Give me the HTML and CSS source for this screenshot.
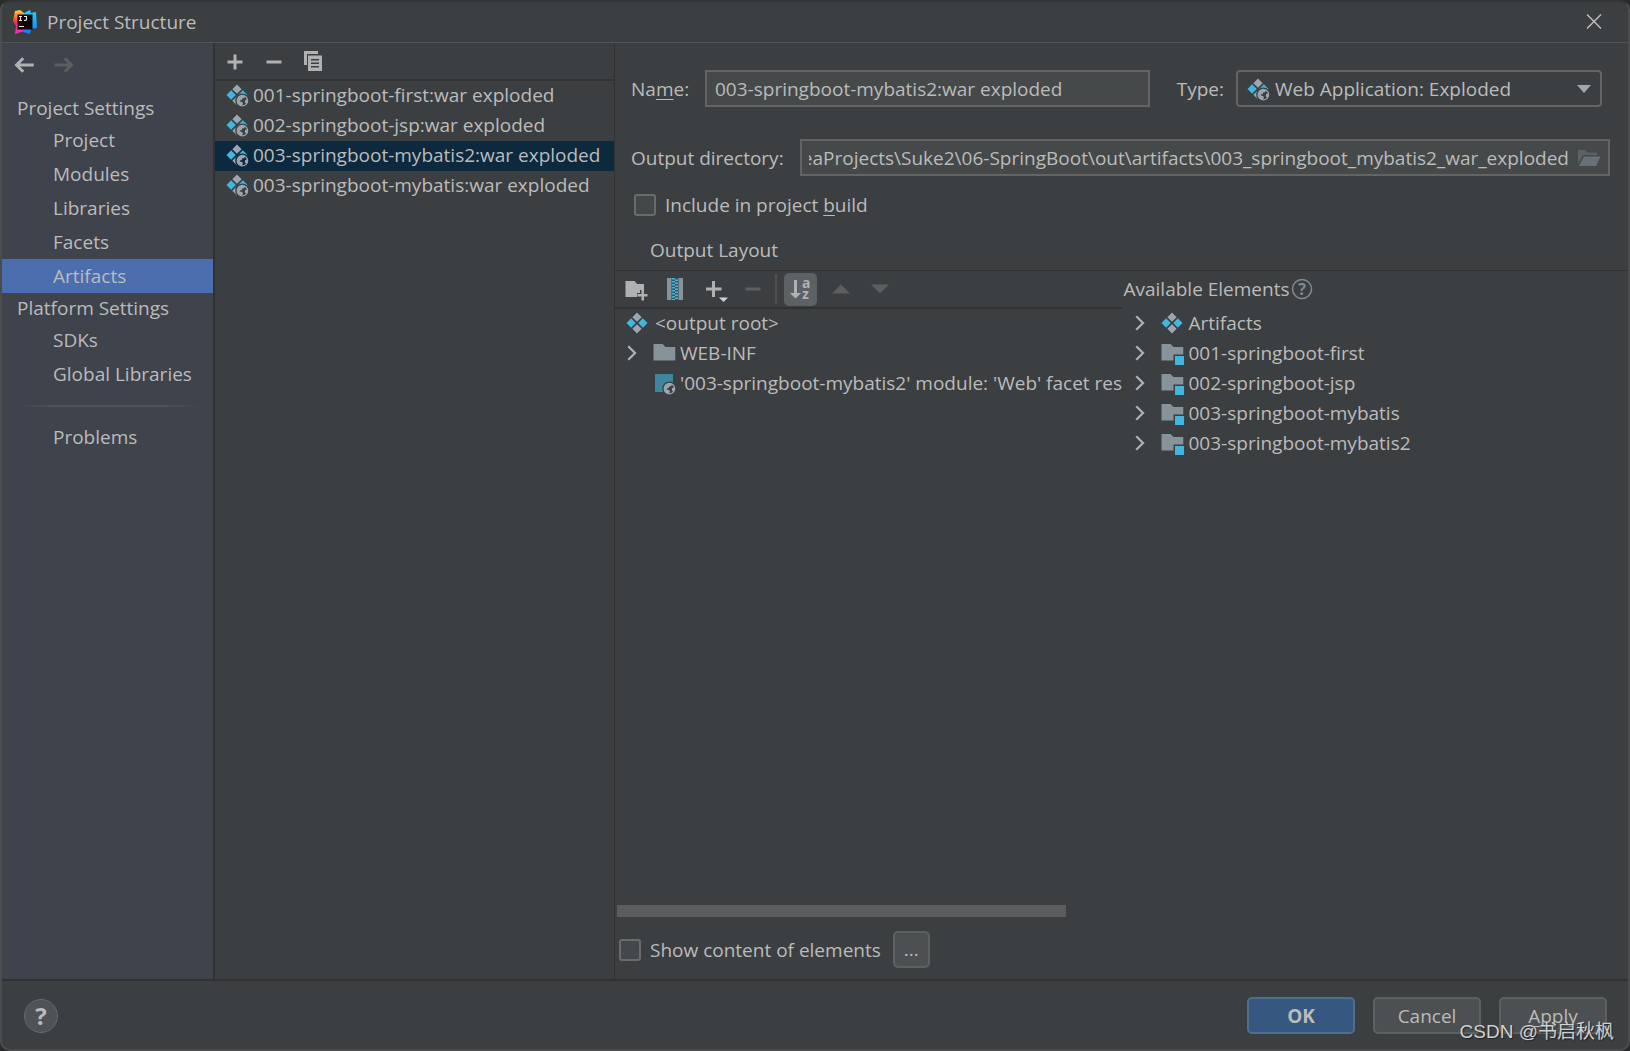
FILE: index.html
```html
<!DOCTYPE html>
<html lang="en">
<head>
<meta charset="utf-8">
<title>Project Structure</title>
<link rel="stylesheet" href="styles.css">
</head>
<body>
<svg class="defs" aria-hidden="true">
  <defs>
    <mask id="globe-cut"><rect width="16" height="16" fill="#fff"/><circle cx="11.6" cy="11.8" r="4.8" fill="#000"/></mask>
    <linearGradient id="lg-blue" x1="0" y1="0" x2="0" y2="1"><stop offset="0" stop-color="#21d7fd"/><stop offset="1" stop-color="#087cfa"/></linearGradient>
    <linearGradient id="lg-warm" x1="0" y1="0" x2="0" y2="1"><stop offset="0" stop-color="#fcd84a"/><stop offset=".3" stop-color="#f97a12"/><stop offset=".5" stop-color="#fe2857"/><stop offset="1" stop-color="#e835c4"/></linearGradient>
    <symbol id="globe" viewBox="0 0 16 16">
      <circle cx="11.6" cy="11.8" r="3.500" fill="none" stroke="#9aa7b0" stroke-width="0.8"/>
      <path d="M8.200 11.500 9.200 9.200 11.500 8.300 13.600 8.800 12.600 10.200 11.400 10.400 11.200 11.400 10 11.600 9.800 12.400 11.400 12.700 12 13.600 11.200 15.200 9.400 14.600 8.300 13z M13.400 11.300 15.200 10.800 15.200 12.600 14 13.800 13.200 12.800z" fill="#9aa7b0"/>
    </symbol>
    <symbol id="diamonds" viewBox="0 0 16 16">
      <path d="M8 1l3.100 3.100L8 7.200 4.900 4.100z M8 8.800l3.100 3.100L8 15l-3.100-3.100z" fill="#9aa7b0"/>
      <path d="M4.100 4.900 7.200 8l-3.100 3.100L1 8z M11.900 4.900 15 8l-3.100 3.100L8.800 8z" fill="#40b6e0"/>
    </symbol>
    <symbol id="web-artifact" viewBox="0 0 16 16">
      <g mask="url(#globe-cut)"><use href="#diamonds" width="16" height="16"/></g>
      <use href="#globe" width="16" height="16"/>
    </symbol>
    <symbol id="web-facet" viewBox="0 0 16 16">
      <path d="M2 2h12v12H2z" fill="#3e86a0" mask="url(#globe-cut)"/>
      <use href="#globe" width="16" height="16"/>
    </symbol>
    <symbol id="folder" viewBox="0 0 16 16"><path d="M1 2h6l2 2h6.500v9H1z" fill="#87939a"/></symbol>
    <symbol id="module" viewBox="0 0 16 16">
      <path d="M1 2h6l2 2h6.500v5H9v4H1z" fill="#87939a"/><path d="M10 10h6v6h-6z" fill="#40b6e0"/>
    </symbol>
    <symbol id="chevron" viewBox="0 0 16 16"><path d="M5.500 3.500 10 8l-4.500 4.500" fill="none" stroke="#afb1b3" stroke-width="1.500"/></symbol>
    <symbol id="plus" viewBox="0 0 16 16"><path d="M7 3h2v4h4v2H9v4H7V9H3V7h4z" fill="currentColor"/></symbol>
    <symbol id="minus" viewBox="0 0 16 16"><path d="M3 7h10v2H3z" fill="currentColor"/></symbol>
    <symbol id="arrow-left" viewBox="0 0 16 16"><path d="M14.500 8H3M7.500 3.500 3 8l4.500 4.500" fill="none" stroke="currentColor" stroke-width="2"/></symbol>
    <symbol id="arrow-right" viewBox="0 0 16 16"><path d="M1.500 8H13M8.500 3.500 13 8l-4.500 4.500" fill="none" stroke="currentColor" stroke-width="2"/></symbol>
  </defs>
</svg>

<div class="window">
  <header class="titlebar">
    <svg class="icon" viewBox="0 0 24 24" aria-hidden="true">
      <path d="M2 1l5-1 4 3v18l-9 3 1-8L0 11z" fill="url(#lg-warm)"/>
      <path d="M11 3l6-3 1 3 5-1 1 16-6 1-1 5-7-2z" fill="url(#lg-blue)"/>
      <path d="M4.500 4.500h15v15h-15z" fill="#120408"/>
      <path d="M6 6.500h3M6 10.500h3M7.500 6v5M11 6.500h2.500v3q0 1-2.500 1M6 16.500h5" fill="none" stroke="#e8e8e8" stroke-width="1.100"/>
    </svg>
    <h1 class="title">Project Structure</h1>
    <button class="icon-button" aria-label="Close">
      <svg class="icon" viewBox="0 0 24 24"><path d="M5 4.500l14 14M19 4.500 5 18.500" fill="none" stroke="#c0c1c1" stroke-width="1.400"/></svg>
    </button>
  </header>

  <div class="content">
    <nav class="sidebar" aria-label="Settings">
      <div class="history">
        <button class="icon-button" aria-label="Back"><svg class="icon"><use href="#arrow-left"/></svg></button>
        <button class="icon-button dim" aria-label="Forward" disabled><svg class="icon"><use href="#arrow-right"/></svg></button>
      </div>
      <h2 class="group">Project Settings</h2>
      <a class="nav-item" href="#project">Project</a>
      <a class="nav-item" href="#modules">Modules</a>
      <a class="nav-item" href="#libraries">Libraries</a>
      <a class="nav-item" href="#facets">Facets</a>
      <a class="nav-item selected" href="#artifacts" aria-current="page">Artifacts</a>
      <h2 class="group">Platform Settings</h2>
      <a class="nav-item" href="#sdks">SDKs</a>
      <a class="nav-item" href="#global-libraries">Global Libraries</a>
      <hr class="nav-rule">
      <a class="nav-item" href="#problems">Problems</a>
    </nav>

    <section class="artifacts" aria-label="Artifacts">
      <div class="list-toolbar">
        <button class="icon-button" aria-label="Add"><svg class="icon"><use href="#plus"/></svg></button>
        <button class="icon-button" aria-label="Remove"><svg class="icon"><use href="#minus"/></svg></button>
        <button class="icon-button" aria-label="Copy">
          <svg class="icon" viewBox="0 0 24 24"><path d="M3 1h14v3H6v11H3z" fill="#afb1b3"/><path d="M7 5.500h14V21H7zM10 9v1.500h8V9zm0 3.500V14h8v-1.500zM10 16v1.500h8V16z" fill="#afb1b3" fill-rule="evenodd"/></svg>
        </button>
      </div>
      <ul class="rows">
        <li class="row"><svg class="icon"><use href="#web-artifact"/></svg>001-springboot-first:war exploded</li>
        <li class="row"><svg class="icon"><use href="#web-artifact"/></svg>002-springboot-jsp:war exploded</li>
        <li class="row selected"><svg class="icon"><use href="#web-artifact"/></svg>003-springboot-mybatis2:war exploded</li>
        <li class="row"><svg class="icon"><use href="#web-artifact"/></svg>003-springboot-mybatis:war exploded</li>
      </ul>
    </section>

    <main class="editor">
      <div class="form">
        <div class="field-row name-row">
          <label class="name-label" for="name">Na<u>m</u>e:</label>
          <input class="field name-field" id="name" type="text" value="003-springboot-mybatis2:war exploded">
          <label for="type">Type:</label>
          <div class="combo">
            <svg class="icon"><use href="#web-artifact"/></svg>
            <select id="type"><option>Web Application: Exploded</option></select>
            <svg class="combo-arrow" viewBox="0 0 14 8" aria-hidden="true"><path d="M0 0h14L7 8z" fill="#a4a6a8"/></svg>
          </div>
        </div>
        <div class="field-row">
          <label class="output-label" for="output">Output directory:</label>
          <div class="field path">
            <input id="output" type="text" dir="rtl" value="D:\java\IdeaProjects\Suke2\06-SpringBoot\out\artifacts\003_springboot_mybatis2_war_exploded">
            <button class="icon-button" aria-label="Browse"><svg class="icon" viewBox="0 0 24 24"><path d="M1 18V4h7l2.500 2.500H20V9H6z" fill="#5b6164"/><path d="M7 10.500h16.500L19 20H2z" fill="#67717a"/></svg></button>
          </div>
        </div>
        <label class="check include"><input type="checkbox"><span>Include in project <u>b</u>uild</span></label>
        <h2 class="tab">Output Layout</h2>
      </div>

      <div class="layout">
        <section class="pane output" aria-label="Output layout">
          <div class="layout-toolbar">
            <button class="icon-button" aria-label="New folder"><svg class="icon" viewBox="0 0 24 24"><path d="M1.500 4h9l2.500 3h7v6h-4v3h-3v4H1.500z" fill="#afb1b3"/><path d="M17.500 13h2.500v4h3.500v2.500H20v4h-2.500v-4h-4V17h4z" fill="#afb1b3"/></svg></button>
            <button class="icon-button" aria-label="New archive"><svg class="icon" viewBox="0 0 24 24"><path d="M4 1h4.500v22H4zM15.500 1H20v22h-4.500z" fill="#87939a"/><path d="M9 1h6v22H9z" fill="#34566a"/><path d="M10.500 1v22" stroke="#40b6e0" stroke-width="3" stroke-dasharray="1.500 1.500"/><path d="M13.500 2.500v20" stroke="#40b6e0" stroke-width="3" stroke-dasharray="1.500 1.500"/></svg></button>
            <button class="icon-button" aria-label="Add copy of"><svg class="icon" viewBox="0 0 24 24"><path d="M10 4h3v6.500h6.500v3H13V20h-3v-6.500H4v-3h6z" fill="#afb1b3"/><path d="M17 20.500h9L21.500 25z" fill="#d0d2d3"/></svg></button>
            <button class="icon-button dim" aria-label="Remove element" disabled><svg class="icon"><use href="#minus"/></svg></button>
            <button class="sort" aria-label="Sort elements" aria-pressed="true"><svg class="icon" viewBox="0 0 24 24"><path d="M6 3h3v13h4l-5.500 5.500L2 16h4z" fill="#afb1b3"/><text x="14" y="11" class="az">a</text><text x="14" y="22" class="az">z</text></svg></button>
            <button class="icon-button dim" aria-label="Move up" disabled><svg class="icon" viewBox="0 0 24 24"><path d="M3 16.500h18L12 7.500z" fill="currentColor"/></svg></button>
            <button class="icon-button dim" aria-label="Move down" disabled><svg class="icon" viewBox="0 0 24 24"><path d="M3 7.500h18l-9 9z" fill="currentColor"/></svg></button>
          </div>
          <ul class="rows tree">
            <li class="row"><svg class="icon"><use href="#diamonds"/></svg>&lt;output root&gt;</li>
            <li class="row"><svg class="icon twist"><use href="#chevron"/></svg><svg class="icon"><use href="#folder"/></svg>WEB-INF</li>
            <li class="row leaf"><svg class="icon"><use href="#web-facet"/></svg><span class="clip">'003-springboot-mybatis2' module: 'Web' facet resources</span></li>
          </ul>
          <div class="scrollbar"><div class="thumb"></div></div>
        </section>
        <section class="pane available" aria-label="Available elements">
          <h2 class="available-title">Available Elements
            <svg class="icon" viewBox="0 0 24 24"><circle cx="12" cy="12" r="9.500" fill="none" stroke="#7f8b91" stroke-width="1.500"/><text x="12" y="18" class="help-mark">?</text></svg>
          </h2>
          <ul class="rows tree">
            <li class="row"><svg class="icon twist"><use href="#chevron"/></svg><svg class="icon"><use href="#diamonds"/></svg>Artifacts</li>
            <li class="row"><svg class="icon twist"><use href="#chevron"/></svg><svg class="icon"><use href="#module"/></svg>001-springboot-first</li>
            <li class="row"><svg class="icon twist"><use href="#chevron"/></svg><svg class="icon"><use href="#module"/></svg>002-springboot-jsp</li>
            <li class="row"><svg class="icon twist"><use href="#chevron"/></svg><svg class="icon"><use href="#module"/></svg>003-springboot-mybatis</li>
            <li class="row"><svg class="icon twist"><use href="#chevron"/></svg><svg class="icon"><use href="#module"/></svg>003-springboot-mybatis2</li>
          </ul>
        </section>
      </div>

      <div class="options">
        <label class="check"><input type="checkbox"><span>Show content of elements</span></label>
        <button class="button more">...</button>
      </div>
    </main>
  </div>

  <footer class="footer">
    <button class="help" aria-label="Help">?</button>
    <button class="button primary">OK</button>
    <button class="button">Cancel</button>
    <button class="button"><u>A</u>pply</button>
  </footer>
</div>
<div class="watermark">CSDN @书启秋枫</div>
</body>
</html>
```
FILE: styles.css
```css
* { box-sizing: border-box; }

body {
  margin: 0;
  background: #2b2b2b;
  color: #bbbbbb;
  font: 19px/30px "Open Sans", "Noto Sans", sans-serif;
}

h1, h2, ul { margin: 0; padding: 0; font: inherit; list-style: none; }
button, input, select { font: inherit; color: inherit; }
input, select { min-width: 0; }
u { text-underline-offset: 3px; text-decoration-thickness: 1px; text-decoration-skip-ink: none; }

.defs { position: absolute; width: 0; height: 0; }
.icon { width: 24px; height: 24px; flex: none; display: block; overflow: visible; }

.icon-button {
  display: block;
  flex: none;
  padding: 0;
  border: 0;
  background: none;
  color: #afb1b3;
}
.icon-button.dim { color: #5c5e5f; }

.window {
  display: flex;
  flex-direction: column;
  min-height: 100vh;
  border: 2px solid #4b4c4d;
  border-top-color: #333536;
  border-radius: 10px;
  background: #3c3f41;
}

.titlebar {
  display: flex;
  align-items: center;
  gap: 10px;
  height: 41px;
  padding: 0 22px 0 11px;
  border-bottom: 1px solid #515456;
}
.title { flex: 1; }

.content { flex: 1; display: flex; }

/* Left navigation */
.sidebar {
  display: flex;
  flex-direction: column;
  flex: none;
  width: 213px;
  border-right: 2px solid #323232;
  background: #3f434c;
}
.history { display: flex; gap: 16px; height: 50px; padding: 10px 10px 0; align-items: flex-start; }
.group { padding-left: 15px; }
.nav-item {
  padding-left: 51px;
  line-height: 34px;
  color: inherit;
  text-decoration: none;
}
.nav-item.selected { background: #4b6eaf; }
.nav-rule {
  width: 186px;
  height: 2px;
  margin: 14px 14px 13px;
  border: 0;
  background: linear-gradient(90deg, transparent, #515151 20%, #515151 80%, transparent);
}

/* Artifact list */
.artifacts { flex: none; width: 400px; border-right: 1px solid #323232; }
.list-toolbar {
  display: flex;
  align-items: center;
  gap: 15px;
  height: 38px;
  padding: 2px 0 0 8px;
  border-bottom: 2px solid #323232;
}
.row { display: flex; align-items: center; gap: 4px; height: 30px; padding-bottom: 2px; line-height: 28px; white-space: nowrap; }
.artifacts .row { padding-left: 10px; }
.artifacts .selected { background: #0d293e; }

/* Artifact editor */
.editor { flex: 1; min-width: 0; display: flex; flex-direction: column; }
.form { padding: 27px 18px 0 16px; border-bottom: 1px solid #323232; }
.field-row { display: flex; align-items: center; margin-bottom: 32px; }
.name-row { padding-right: 8px; gap: 12px; }
.name-label { width: 62px; }
.output-label { flex: none; width: 169px; }
.field, .combo { height: 37px; border: 2px solid #646464; background: #45494a; }
.name-field { flex: 1; padding: 0 8px; margin-right: 15px; }
.combo {
  display: flex;
  align-items: center;
  gap: 5px;
  width: 366px;
  padding: 0 9px 0 8px;
  border-radius: 4px;
  background: none;
}
.combo select { flex: 1; height: 33px; padding: 0; border: 0; appearance: none; background: none; }
.combo-arrow { width: 14px; height: 8px; }
.path { flex: 1; display: flex; align-items: center; gap: 8px; padding: 0 7px; }
.path input { flex: 1; height: 33px; padding: 0; border: 0; background: none; }

.check { display: flex; align-items: center; gap: 9px; }
.check input {
  appearance: none;
  width: 22px;
  height: 22px;
  margin: 0;
  border: 2px solid #6b6b6b;
  border-radius: 3px;
  background: #43494a;
}
.include { margin: -18px 0 0 3px; }
.tab { margin: 15px 0 5px 19px; }

.layout { flex: 1; display: grid; grid-template-columns: 1fr 1fr; }
.pane { min-width: 0; display: flex; flex-direction: column; }
.layout-toolbar {
  display: flex;
  align-items: center;
  gap: 15px;
  height: 38px;
  padding-left: 9px;
  border-bottom: 2px solid #323232;
}
.layout-toolbar .dim + .sort { margin: 0 -3px 0 4px; }
.sort {
  width: 33px;
  height: 33px;
  padding: 4px;
  border: 0;
  border-radius: 5px;
  background: #5c6164;
  position: relative;
}
.sort::before {
  content: "";
  position: absolute;
  left: -9px;
  top: 1px;
  width: 2px;
  height: 30px;
  background: #515151;
}
.az { font: bold 14px "Noto Sans", sans-serif; fill: #afb1b3; }
.help-mark { font: bold 16px "Noto Sans", sans-serif; fill: #7f8b91; text-anchor: middle; }

.output .row { padding-left: 10px; }
.output .row:first-child { gap: 6px; }
.output .row .twist { margin: 0 0 0 -5px; }
.output .row .twist + .icon { margin-left: 4px; }
.output .leaf { padding-left: 37px; }
.clip { overflow: hidden; }
.scrollbar { margin-top: auto; padding: 0 0 10px 2px; }
.thumb { width: 89%; height: 12px; background: #5b5c5d; }

.available-title { display: flex; align-items: center; height: 38px; padding: 0 0 2px 2px; }
.available .row { padding-left: 6px; gap: 5px; }
.available .twist { margin-right: 3px; }

.options { display: flex; align-items: center; gap: 12px; padding: 4px 0 11px 4px; }

/* Buttons */
.button {
  width: 108px;
  height: 37px;
  padding: 0;
  border: 2px solid #5e6060;
  border-radius: 5px;
  background: #4c5052;
}
.button.more { width: 37px; line-height: 33px; }
.button.primary { border-color: #4c708c; background: #365880; font-weight: bold; }

.footer {
  display: flex;
  align-items: center;
  gap: 18px;
  height: 70px;
  padding: 1px 21px 0 22px;
  border-top: 2px solid #323232;
}
.help {
  width: 34px;
  height: 34px;
  margin-right: auto;
  padding: 0;
  border: 1px solid #666869;
  border-radius: 50%;
  background: #4f5355;
  font-size: 24px;
  font-weight: bold;
}

.watermark {
  position: absolute;
  right: 16px;
  bottom: 4px;
  color: #d0d0d0;
  font: 19px/30px "Liberation Sans", "Noto Sans CJK SC", sans-serif;
  text-shadow: 1px 1px 1px #222222;
}
```
